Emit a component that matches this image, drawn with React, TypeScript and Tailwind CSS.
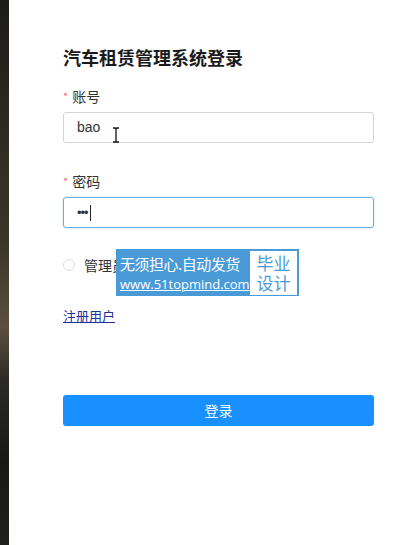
import React from "react";

const cjk = '"Noto Sans CJK SC", "Noto Sans", sans-serif';

export default function App() {
  return (
    <div className="flex h-[545px] w-[417px] overflow-hidden bg-white" style={{ fontFamily: cjk }}>
      <div className="w-[9px] shrink-0 bg-[linear-gradient(180deg,#1e1c18_0%,#2b2820_20%,#3a3628_45%,#5a5040_60%,#2c2a24_70%,#1a1814_85%,#22201c_100%)]" />
      <div className="relative flex-1 pl-[54px] pt-[44px]">
        <div className="flex w-[311px] flex-col">
          <h1 className="text-[18px] font-bold leading-[26px] text-[#1a1a1a]">汽车租赁管理系统登录</h1>

          <label className="mt-[16px] flex items-center text-[14px] leading-[20px] text-[#333]">
            <span className="mr-[4px] text-[11px] text-[#f56c6c]">*</span>账号
          </label>
          <div className="relative mt-[6px] flex h-[31px] items-center rounded-[3px] border border-[#d4d4d4] px-[13px] text-[14px] text-[#333]" style={{ fontFamily: '"Liberation Sans", Arial, sans-serif' }}>
            bao
            <svg className="absolute left-[48px] top-[14px]" width="8" height="16" viewBox="0 0 8 16">
              <path d="M1 1 H3 Q4 1 4 2 V14 Q4 15 3 15 H1 M7 1 H5 Q4 1 4 2 M7 15 H5 Q4 15 4 14" fill="none" stroke="#111" strokeWidth="1.3" />
            </svg>
          </div>

          <label className="mt-[28px] flex items-center text-[14px] leading-[20px] text-[#333]">
            <span className="mr-[4px] text-[11px] text-[#f56c6c]">*</span>密码
          </label>
          <div className="mt-[6px] flex h-[31px] items-center rounded-[3px] border border-[#6aaee6] px-[13px] text-[#333] shadow-[0_0_2px_rgba(102,175,233,0.5)]">
            <span className="text-[13px] tracking-[-1px]" style={{ fontFamily: '"Liberation Sans", Arial, sans-serif' }}>•••</span>
            <span className="ml-[2px] h-[16px] w-[1px] bg-[#222]" />
          </div>

          <div className="mt-[27px] flex h-[20px] items-center text-[14px] text-[#333]">
            <span className="h-[12px] w-[12px] rounded-full border border-[#dcdcdc]" />
            <span className="ml-[9px]">管理员</span>
          </div>

          <a className="mt-[31px] self-start text-[13px] leading-[20px] text-[#1d2f9a] underline" href="#">注册用户</a>

          <button className="mt-[69px] h-[31px] rounded-[3px] bg-[#1890ff] text-[14px] text-white">登录</button>
        </div>

        <div className="absolute left-[107px] top-[249px] flex h-[47px] w-[183px] items-center bg-[#4a9ad8] pl-[4px] pr-[2px]">
          <div className="flex flex-col leading-none text-white">
            <span className="text-[15px] leading-[22px] tracking-[-0.5px]">无须担心.自动发货</span>
            <span className="text-[13px] leading-[18px] underline" style={{ fontFamily: '"Open Sans", sans-serif' }}>www.51topmind.com</span>
          </div>
          <div className="ml-auto flex h-[44px] w-[47px] flex-col items-center justify-center bg-white text-[17px] leading-[20px] text-[#4a9ad8]">
            <span>毕业</span>
            <span>设计</span>
          </div>
        </div>
      </div>
    </div>
  );
}
